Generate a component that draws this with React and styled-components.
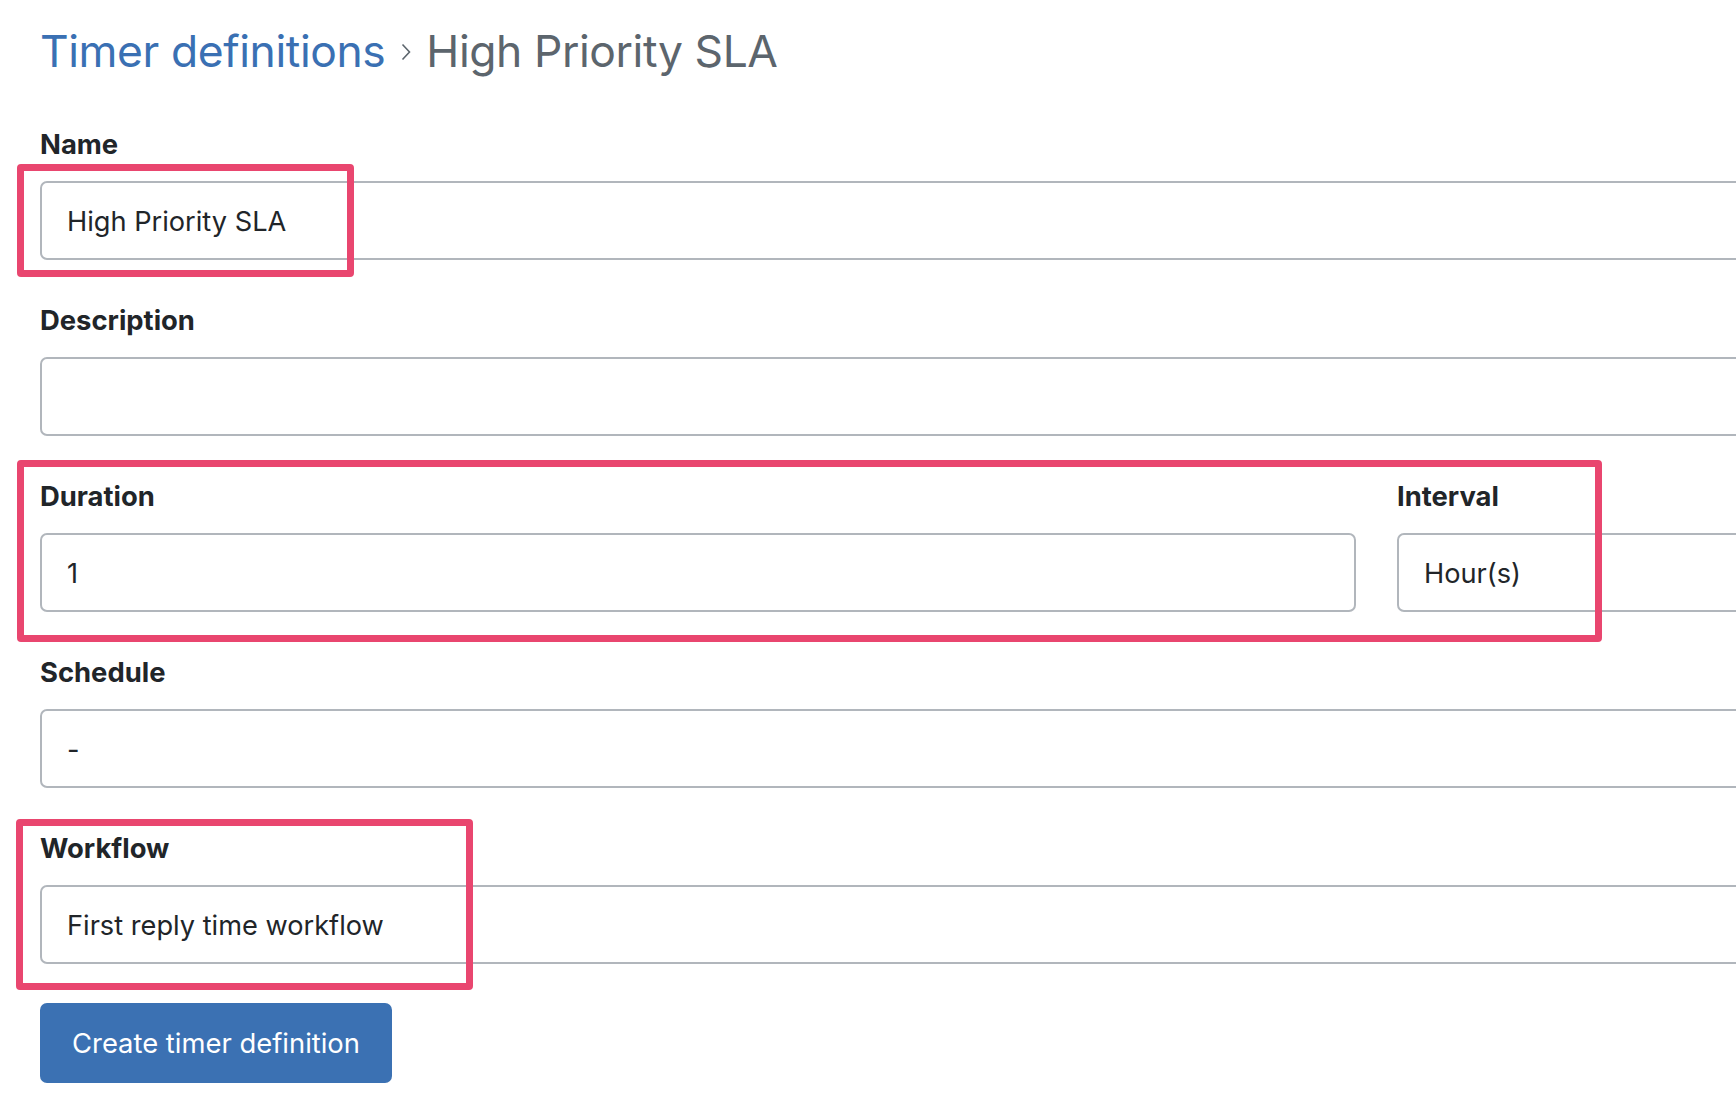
import React from "react";
import styled, { createGlobalStyle } from "styled-components";

const GlobalStyle = createGlobalStyle`
	html, body {
		margin: 0;
		background: #fff;
	}
	body {
		font-family: Inter, "Liberation Sans", sans-serif;
		color: #212529;
		overflow: hidden;
	}
`;

const Page = styled.div`
	position: relative;
	box-sizing: border-box;
	width: 1736px;
	height: 1114px;
	padding: 23px 0 0 40px;
	overflow: hidden;
`;

const Title = styled.h1`
	display: flex;
	align-items: center;
	margin: 0 0 44px;
	font-size: 44.4px;
	font-weight: 400;
	line-height: 56px;
	letter-spacing: -0.4px;
	white-space: nowrap;
`;

const Crumb = styled.a`
	color: #3a70b3;
	text-decoration: none;
`;

const Current = styled.span`
	color: #5c656d;
`;

const Chevron = styled.svg`
	flex: none;
	margin: 2px 15px 0 16px;
`;

const Form = styled.form`
	width: 1800px;
`;

const Field = styled.div`
	margin-bottom: 39px;
`;

const Row = styled.div`
	display: grid;
	grid-template-columns: 1316px 1fr;
	column-gap: 41px;
`;

const Label = styled.label`
	display: block;
	margin-bottom: 16px;
	font-size: 27.4px;
	font-weight: 700;
	line-height: 42px;
	color: #212529;
`;

const Input = styled.input`
	display: block;
	box-sizing: border-box;
	width: 100%;
	height: 79px;
	padding: 2px 25px 0;
	border: 2px solid #b1b6bc;
	border-radius: 7px;
	background: #fff;
	font-family: Inter, "Liberation Sans", sans-serif;
	font-size: 27.2px;
	color: #212529;
	outline: none;
`;

const Button = styled.button`
	display: block;
	box-sizing: border-box;
	width: 352px;
	height: 80px;
	margin-top: 2px;
	padding: 0;
	border: none;
	border-radius: 7px;
	background: #3b71b3;
	color: #fff;
	font-family: Inter, "Liberation Sans", sans-serif;
	font-size: 27.4px;
	cursor: pointer;
`;

const Highlight = styled.div`
	position: absolute;
	left: ${p => p.$x}px;
	top: ${p => p.$y}px;
	width: ${p => p.$w}px;
	height: ${p => p.$h}px;
	box-sizing: border-box;
	border: 7px solid #e9466f;
	border-radius: 4px;
	pointer-events: none;
`;

const TextField = ({ label, value }) => (
	<Field>
		<Label>{label}</Label>
		<Input readOnly value={value} />
	</Field>
);

export default function App() {
	return (
		<Page>
			<GlobalStyle />
			<Title>
				<Crumb href="#">Timer definitions</Crumb>
				<Chevron width="10" height="18" viewBox="0 0 10 18">
					<path d="M1.5 1.5 L8.5 9 L1.5 16.5" fill="none" stroke="#5c656d" strokeWidth="1.6" />
				</Chevron>
				<Current>High Priority SLA</Current>
			</Title>
			<Form onSubmit={e => e.preventDefault()}>
				<TextField label="Name" value="High Priority SLA" />
				<TextField label="Description" value="" />
				<Row>
					<TextField label="Duration" value="1" />
					<TextField label="Interval" value="Hour(s)" />
				</Row>
				<TextField label="Schedule" value="-" />
				<TextField label="Workflow" value="First reply time workflow" />
				<Button type="submit">Create timer definition</Button>
			</Form>
			<Highlight $x={17} $y={164} $w={337} $h={113} />
			<Highlight $x={17} $y={460} $w={1585} $h={182} />
			<Highlight $x={16} $y={819} $w={457} $h={171} />
		</Page>
	);
}
